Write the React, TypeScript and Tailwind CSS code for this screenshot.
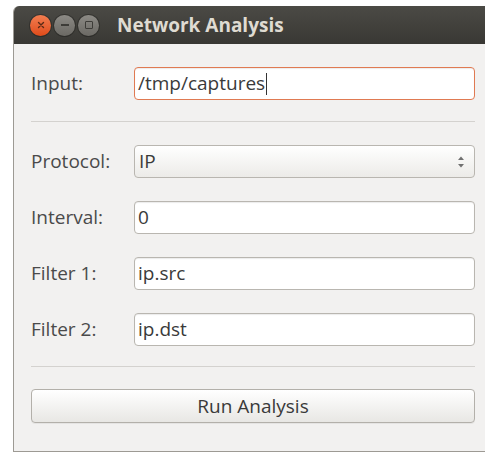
import React from "react";

const font = { fontFamily: '"Open Sans", "Noto Sans", sans-serif' };

function Field({ label, value, focused }: { label: string; value: string; focused?: boolean }) {
  return (
    <div className="flex items-center">
      <div className="w-[103px] shrink-0 text-[19px] leading-none text-[#4a4a4a]">{label}</div>
      <div
        className={
          focused
            ? "flex h-[33px] flex-1 items-center rounded-[4px] border border-[#e07a52] bg-white px-[3px] shadow-[inset_0_1px_1px_rgba(0,0,0,0.08)]"
            : "flex h-[33px] flex-1 items-center rounded-[4px] border border-[#b9b6b0] bg-white px-[3px] shadow-[inset_0_1px_1px_rgba(0,0,0,0.08)]"
        }
      >
        <span className="text-[19px] leading-none text-[#3a3a3a]">{value}</span>
        {focused && <span className="ml-[1px] h-[22px] w-[1px] bg-[#333]" />}
      </div>
    </div>
  );
}

function Combo({ label, value }: { label: string; value: string }) {
  return (
    <div className="flex items-center">
      <div className="w-[103px] shrink-0 text-[19px] leading-none text-[#4a4a4a]">{label}</div>
      <div className="flex h-[33px] flex-1 items-center justify-between rounded-[4px] border border-[#b9b6b0] bg-gradient-to-b from-[#ffffff] to-[#ecebe8] pl-[4px] pr-[6px]">
        <span className="text-[19px] leading-none text-[#3a3a3a]">{value}</span>
        <svg width="10" height="18" viewBox="0 0 10 18" className="mr-[2px]">
          <path d="M2 7 L5 3.5 L8 7 Z" fill="#707070" />
          <path d="M2 11 L5 14.5 L8 11 Z" fill="#707070" />
        </svg>
      </div>
    </div>
  );
}

export default function App() {
  return (
    <div className="h-[454px] w-[485px] overflow-hidden bg-white pl-[13px] pt-[6px]" style={font}>
      <div className="flex h-[446px] flex-col overflow-hidden rounded-tl-[6px] border-b border-l border-[#9d9a94]">
        {/* title bar */}
        <div className="flex h-[38px] shrink-0 items-center bg-gradient-to-b from-[#4b4a45] to-[#393834] pl-[16px]">
          <div className="flex items-center gap-[3px]">
            <div className="flex h-[21px] w-[21px] items-center justify-center rounded-full bg-gradient-to-b from-[#f27d4f] to-[#df4a17] shadow-[0_0_0_1px_rgba(0,0,0,0.25)]">
              <svg width="8" height="8" viewBox="0 0 8 8">
                <path d="M1.5 1.5 L6.5 6.5 M6.5 1.5 L1.5 6.5" stroke="#5a2a16" strokeWidth="1.4" strokeLinecap="round" />
              </svg>
            </div>
            <div className="flex h-[21px] w-[21px] items-center justify-center rounded-full bg-gradient-to-b from-[#8c8a85] to-[#6b6964] shadow-[0_0_0_1px_rgba(0,0,0,0.25)]">
              <div className="h-[1.5px] w-[8px] bg-[#3d3c38]" />
            </div>
            <div className="flex h-[21px] w-[21px] items-center justify-center rounded-full bg-gradient-to-b from-[#8c8a85] to-[#6b6964] shadow-[0_0_0_1px_rgba(0,0,0,0.25)]">
              <div className="h-[8px] w-[8px] rounded-[1px] border-[1.5px] border-[#3d3c38]" />
            </div>
          </div>
          <div className="ml-[18px] text-[19px] font-bold leading-none text-[#dfdbd2]">Network Analysis</div>
        </div>

        {/* body */}
        <div className="flex flex-1 flex-col bg-[#f2f1f0] pl-[17px] pr-[10px] pt-[23px]">
          <Field label="Input:" value="/tmp/captures" focused />
          <div className="mb-[23px] mt-[21px] h-px bg-[#d4d2cf]" />
          <div className="flex flex-col gap-[23px]">
            <Combo label="Protocol:" value="IP" />
            <Field label="Interval:" value="0" />
            <Field label="Filter 1:" value="ip.src" />
            <Field label="Filter 2:" value="ip.dst" />
          </div>
          <div className="mb-[22px] mt-[20px] h-px bg-[#d4d2cf]" />
          <button className="h-[34px] rounded-[4px] border border-[#b3b0aa] bg-gradient-to-b from-[#ffffff] to-[#e8e7e4] text-[19px] leading-none text-[#3a3a3a] shadow-[0_1px_0_rgba(0,0,0,0.05)]">
            Run Analysis
          </button>
        </div>
      </div>
    </div>
  );
}
